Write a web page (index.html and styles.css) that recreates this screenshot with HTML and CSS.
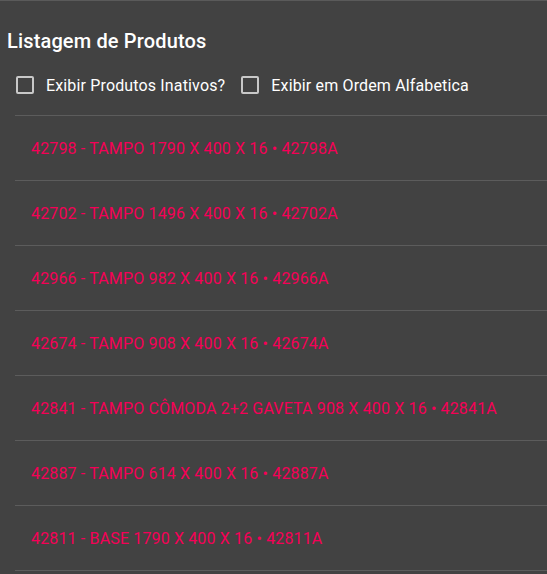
FILE: index.html
```html
<!DOCTYPE html>
<html lang="pt">
<head>
<meta charset="utf-8">
<link rel="stylesheet" href="styles.css">
</head>
<body>
<div class="panel">
  <h2 class="title">Listagem de Produtos</h2>
  <div class="filters">
    <label class="check"><span class="box"></span><span>Exibir Produtos Inativos?</span></label>
    <label class="check"><span class="box"></span><span>Exibir em Ordem Alfabetica</span></label>
  </div>
  <ul class="list">
    <li class="item">42798 - TAMPO 1790 X 400 X 16 • 42798A</li>
    <li class="item">42702 - TAMPO 1496 X 400 X 16 • 42702A</li>
    <li class="item">42966 - TAMPO 982 X 400 X 16 • 42966A</li>
    <li class="item">42674 - TAMPO 908 X 400 X 16 • 42674A</li>
    <li class="item">42841 - TAMPO CÔMODA 2+2 GAVETA 908 X 400 X 16 • 42841A</li>
    <li class="item">42887 - TAMPO 614 X 400 X 16 • 42887A</li>
    <li class="item">42811 - BASE 1790 X 400 X 16 • 42811A</li>
  </ul>
</div>
</body>
</html>
```
FILE: styles.css
```css
html, body {
  margin: 0;
  padding: 0;
  background: #424242;
  font-family: Roboto, "Noto Sans", sans-serif;
}
.panel {
  border-top: 1px solid #5a5a5a;
  min-height: 573px;
}
.title {
  margin: 0;
  padding: 24px 0 0 7px;
  font-size: 20px;
  font-weight: 500;
  line-height: 32px;
  letter-spacing: 0.15px;
  color: #ffffff;
}
.filters {
  display: flex;
  gap: 16px;
  padding: 0 0 0 16px;
  margin: 16px 0 18px;
  height: 24px;
  align-items: center;
}
.check {
  display: flex;
  align-items: center;
  gap: 12px;
  font-size: 16px;
  letter-spacing: 0.15px;
  color: #ffffff;
  height: 24px;
}
.box {
  width: 14px;
  height: 14px;
  border: 2px solid #c8c8c8;
  border-radius: 2px;
  flex: none;
}
.list {
  list-style: none;
  margin: 0 0 0 15px;
  padding: 0;
  border-top: 1px solid #5c5c5c;
}
.item {
  height: 64px;
  border-bottom: 1px solid #5c5c5c;
  display: flex;
  align-items: center;
  padding-left: 16px;
  font-size: 16px;
  letter-spacing: 0.15px;
  color: #f50057;
}
```
